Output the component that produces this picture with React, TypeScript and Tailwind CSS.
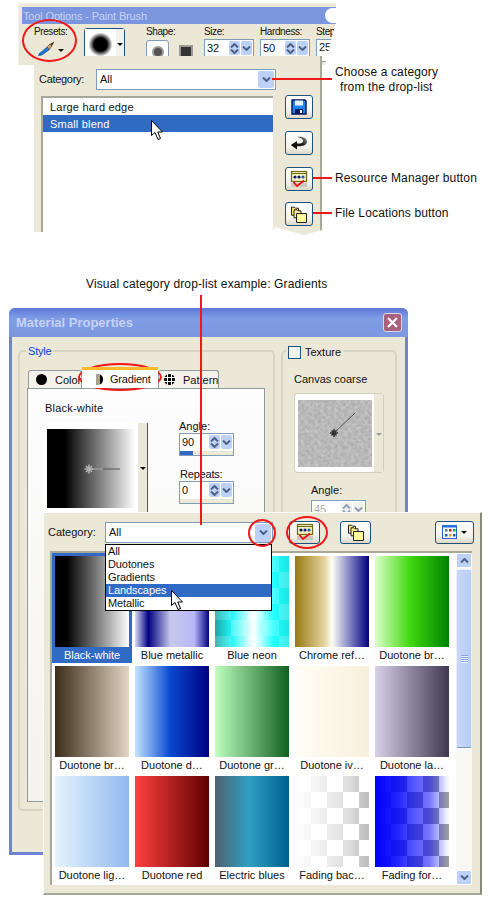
import React from 'react';

const ui = "font-['Liberation_Sans',Arial,sans-serif] text-[11px] leading-[14px] text-[#111]";
const toolLabel = 'text-[10px] tracking-[-0.4px]';

const swatches = [
    { name: 'Black-white', bg: 'bg-[linear-gradient(to_right,#000_16%,#fff_100%)]' },
    { name: 'Blue metallic', bg: 'bg-[linear-gradient(to_right,#d8d8f8_0%,#000080_18%,#c8c8ec_48%,#b8b8f8_80%,#000080_100%)]' },
    { name: 'Blue neon', bg: 'bg-[linear-gradient(to_right,rgba(255,255,255,0.12),rgba(255,255,255,0.12)),repeating-conic-gradient(rgba(255,255,255,0.16)_0_25%,transparent_0_50%),linear-gradient(to_right,#009898_0%,#00f4f4_22%,#fff_52%,#00ffff_80%,#00e0e0_100%)] bg-[length:100%_100%,32px_32px,100%_100%]' },
    { name: 'Chrome ref…', bg: 'bg-[linear-gradient(to_right,#987810_0%,#e4d4a0_40%,#fffef4_50%,#a0a0d0_68%,#000080_100%)]' },
    { name: 'Duotone br…', bg: 'bg-[linear-gradient(to_right,#dcffc8_0%,#40d810_48%,#008000_100%)]' },
    { name: 'Duotone br…', bg: 'bg-[linear-gradient(to_right,#3c2c18,#e2d6c4)]' },
    { name: 'Duotone d…', bg: 'bg-[linear-gradient(to_right,#c4e4ff_0%,#0848d0_48%,#000080_100%)]' },
    { name: 'Duotone gr…', bg: 'bg-[linear-gradient(to_right,#c0ffc0,#106020)]' },
    { name: 'Duotone iv…', bg: 'bg-[linear-gradient(to_right,#fffdf6,#f8f0dc)]' },
    { name: 'Duotone la…', bg: 'bg-[linear-gradient(to_right,#d8d0e8,#403850)]' },
    { name: 'Duotone lig…', bg: 'bg-[linear-gradient(to_right,#e4f4fc,#90b8f0)]' },
    { name: 'Duotone red', bg: 'bg-[linear-gradient(to_right,#ff4040,#600000)]' },
    { name: 'Electric blues', bg: 'bg-[linear-gradient(to_right,#506070_0%,#30a0c0_45%,#006090_100%)]' },
    { name: 'Fading bac…', bg: 'bg-[linear-gradient(to_right,#fff_0%,rgba(255,255,255,0.82)_32%,rgba(255,255,255,0.5)_76%,rgba(255,255,255,0.1)_95%),repeating-conic-gradient(#b8b8b8_0_25%,#fff_0_50%)] bg-[length:100%_100%,32px_32px]' },
    { name: 'Fading for…', bg: 'bg-[linear-gradient(to_right,#00f_0%,rgba(0,0,255,0.85)_32%,rgba(0,0,255,0.65)_54%,rgba(0,0,255,0.55)_73%,rgba(0,0,255,0)_100%),repeating-conic-gradient(#a0a0a0_0_25%,#fff_0_50%)] bg-[length:100%_100%,32px_32px]' },
];

function Chevron({ up = false }: { up?: boolean }) {
    return (
        <svg width="9" height="5" viewBox="0 0 9 5" className="block">
            <path d={up ? 'M1 4.5 L4.5 1 L8 4.5' : 'M1 .5 L4.5 4 L8 .5'} fill="none" stroke="#4d6185" strokeWidth="2" />
        </svg>
    );
}

function Spin({ disabled = false }: { disabled?: boolean }) {
    const box = disabled ? 'bg-[#e8e8e0] opacity-60' : 'bg-[#bdd0f7]';
    return (
        <div className="flex gap-[1px]">
            <div className={`w-[11px] h-[14px] rounded-[2px] flex flex-col items-center justify-center gap-[1px] ${box}`}>
                <Chevron up />
                <Chevron />
            </div>
            <div className={`w-[11px] h-[14px] rounded-[2px] flex items-center justify-center ${box}`}>
                <Chevron />
            </div>
        </div>
    );
}

function NumInput({ value, w = 'w-[50px]', fill = '', disabled = false }: { value: string; w?: string; fill?: string; disabled?: boolean }) {
    return (
        <div className={`${w} h-[23px] border border-[#7f9db9] bg-white flex flex-col`}>
            <div className="h-[16px] pl-[2px] pr-[1px] flex items-center justify-between">
                <span className={`text-[11px] ${disabled ? 'text-[#aaa]' : ''}`}>{value}</span>
                <Spin disabled={disabled} />
            </div>
            <div className="flex-1 bg-[#ebe8d8] mt-[1px]">
                {fill && <div className={`h-full bg-[#316ac5] ${fill}`} />}
            </div>
        </div>
    );
}

function ToolBtn({ w, h, children }: { w: string; h: string; children: React.ReactNode }) {
    return (
        <div className={`${w} ${h} shrink-0 border border-[#1c5180] rounded-[3px] bg-[linear-gradient(to_bottom,#fff,#f2f1ea_70%,#dcd8c8)] flex items-center justify-center`}>
            {children}
        </div>
    );
}

function Arrow({ color = '#111' }: { color?: string }) {
    return <div className="w-0 h-0 border-x-[3px] border-x-transparent border-t-[3px]" style={{ borderTopColor: color }} />;
}

function Floppy() {
    return (
        <svg width="16" height="16" viewBox="0 0 16 16">
            <path d="M1 1h13l1 1v13H1z" fill="#1e84f4" stroke="#06124a" strokeWidth="1.4" />
            <rect x="4" y="1.5" width="8" height="5" fill="#e8f2ff" />
            <rect x="4" y="10" width="8" height="5" fill="#0a1a60" />
            <rect x="9" y="11" width="2" height="3" fill="#fff" />
        </svg>
    );
}

function UndoIcon() {
    return (
        <svg width="18" height="14" viewBox="0 0 18 14">
            <defs>
                <linearGradient id="undo" x1="0" x2="1" y1="1" y2="0">
                    <stop offset="0" stopColor="#000" />
                    <stop offset="0.6" stopColor="#222" />
                    <stop offset="1" stopColor="#aaa" />
                </linearGradient>
            </defs>
            <path d="M7 .8 C12 .2 17 1.5 17 5.5 C17 9.5 12 10.5 7 10.2 V13.5 L.8 9 L7 5 V7.5 C10 7.8 13 7.2 13 5 C13 3 10 1.8 7 .8Z" fill="url(#undo)" />
        </svg>
    );
}

function ResourceIcon() {
    return (
        <svg width="18" height="18" viewBox="0 0 18 18">
            <rect x="1.5" y="1.5" width="15" height="10" fill="#f6f2c0" stroke="#6b6a10" strokeWidth="1.2" />
            <rect x="1" y="13" width="16" height="4" fill="#c8c8c0" />
            <line x1="2" y1="3.5" x2="16" y2="3.5" stroke="#6b6a10" />
            <circle cx="5" cy="7" r="1.6" fill="#0a1a70" />
            <circle cx="9" cy="7" r="1.6" fill="#0a1a70" />
            <circle cx="13" cy="7" r="1.6" fill="#1060a0" />
            <path d="M3.5 12 L7 16 L14 10.5" fill="none" stroke="#f01010" strokeWidth="1.8" />
        </svg>
    );
}

function FoldersIcon() {
    return (
        <svg width="16" height="17" viewBox="0 0 16 17">
            <path d="M.5 3V1.2h3l1 1h3v7h-7z" fill="#ffe880" stroke="#222" />
            <path d="M3 6V3.8h3l1 1h3v7H3z" fill="#fff09a" stroke="#222" />
            <path d="M5.5 7.5h10v9h-10z" fill="#ffff9c" stroke="#222" />
        </svg>
    );
}

function ViewIcon() {
    return (
        <svg width="15" height="14" viewBox="0 0 15 14">
            <rect x=".5" y=".5" width="14" height="13" fill="#f4f8ff" stroke="#2060d0" />
            <rect x="0" y="0" width="15" height="2.5" fill="#2070e0" />
            <rect x="3" y="4" width="2.5" height="2.5" fill="#707880" />
            <rect x="7" y="4" width="2.5" height="2.5" fill="#c02020" />
            <rect x="11" y="4" width="2.5" height="2.5" fill="#20a040" />
            <rect x="3" y="9" width="2.5" height="2.5" fill="#2060c0" />
            <rect x="7" y="9" width="2.5" height="2.5" fill="#e0a020" />
            <rect x="11" y="9" width="2.5" height="2.5" fill="#4050a0" />
        </svg>
    );
}

function BrushIcon() {
    return (
        <svg width="18" height="15" viewBox="0 0 18 15">
            <path d="M.5 14.5 C1 12 2.5 11.5 4 10.5 L9 6 L11.5 8.5 L6 12.5 C4.5 14 2.5 14.5 .5 14.5Z" fill="#1a7ad8" stroke="#0a3a80" strokeWidth=".6" />
            <path d="M9 6 L12 3 L14 5 L11.5 8.5Z" fill="#c8a070" stroke="#604020" strokeWidth=".6" />
            <path d="M12 3 L16.5 .5 L14 5Z" fill="#402c18" />
        </svg>
    );
}

function PatternIcon() {
    return (
        <svg width="11" height="11" viewBox="0 0 11 11" className="shrink-0">
            <circle cx="5.5" cy="5.5" r="5.5" fill="#000" />
            <path d="M3.5 0v11M7.5 0v11M0 3.5h11M0 7.5h11" stroke="#fff" />
        </svg>
    );
}

function Cursor({ className }: { className: string }) {
    return (
        <svg width="13" height="21" viewBox="0 0 13 21" className={className}>
            <path d="M.5 .5 V15.5 L4 12.5 L7 19.5 L9.5 18.5 L6.8 12 H11.5Z" fill="#fff" stroke="#000" />
        </svg>
    );
}

function GradCross() {
    return (
        <svg width="88" height="79" viewBox="0 0 88 79" className="absolute inset-0">
            <line x1="42" y1="40" x2="73" y2="40" stroke="#555" />
            <line x1="42" y1="40" x2="56" y2="40" stroke="#bbb" />
            <path d="M42 35.5v9M37.5 40h9M39 37l6 6M45 37l-6 6" stroke="#b0b0b0" strokeWidth="1.6" />
        </svg>
    );
}

function TextureSwatch() {
    return (
        <svg width="74" height="67" viewBox="0 0 74 67" className="block">
            <defs>
                <filter id="grain">
                    <feTurbulence type="fractalNoise" baseFrequency="0.3" numOctaves="3" seed="4" />
                    <feColorMatrix values="0 0 0 0 0.8  0 0 0 0 0.8  0 0 0 0 0.8  0 0 0 1.6 -0.5" />
                </filter>
                <pattern id="hatch" width="6" height="6" patternUnits="userSpaceOnUse" patternTransform="rotate(45)">
                    <line x1="0" y1="0" x2="0" y2="6" stroke="#989898" strokeWidth="1" />
                    <line x1="0" y1="3" x2="6" y2="3" stroke="#c4c4c4" strokeWidth="1" />
                </pattern>
            </defs>
            <rect width="74" height="67" fill="#b0b0b0" />
            <rect width="74" height="67" fill="url(#hatch)" opacity="0.5" />
            <rect width="74" height="67" filter="url(#grain)" opacity="0.5" />
            <line x1="36" y1="33" x2="57" y2="13" stroke="#333" strokeWidth=".8" />
            <path d="M36 29v8M32 33h8M33.5 30.5l5 5M38.5 30.5l-5 5" stroke="#333" strokeWidth="1.5" />
        </svg>
    );
}

function Callout({ y, x, w, children, textX }: { y: string; x: string; w: string; children?: React.ReactNode; textX?: string }) {
    return (
        <>
            <div className={`absolute h-[2px] bg-[#f01818] ${y} ${x} ${w}`} />
            {children && <div className={`absolute ${textX}`}>{children}</div>}
        </>
    );
}

const note = "font-['Liberation_Sans',Arial,sans-serif] text-[12px] leading-[15px] tracking-[0.14px] text-[#111] whitespace-nowrap";

function ToolOptions() {
    return (
        <div className="relative h-[277px]">
            <div className={`${ui} absolute left-[18px] top-[3px] w-[318px] h-[62px] bg-[#ebe8d8] border-t border-l border-[#f4f2e8] [clip-path:polygon(0_0,100%_0,100%_20px,315px_30px,307px_100%,0_100%)]`}>
                <div className="relative mt-[3px] ml-[3px] h-[17px] bg-[#7b96de] pl-[1px] flex items-center text-[#c6d2f2] text-[11px] tracking-[-0.15px]">
                    Tool Options - Paint Brush
                    <div className="absolute right-[-1px] top-[1px] w-[12px] h-[15px] bg-white rounded-l-full" />
                </div>
                <div className="flex pl-[15px] pt-[1px]">
                    <div className="w-[50px] flex flex-col">
                        <span className={toolLabel}>Presets:</span>
                        <div className="mt-[2px] ml-[4px] flex items-center gap-[2px]">
                            <BrushIcon />
                            <div className="mt-[3px]"><Arrow /></div>
                        </div>
                    </div>
                    <div className="w-[41px] h-[38px] mt-[3px] border border-[#1c5180] rounded-[3px] bg-white flex">
                        <div className="w-[31px] h-[31px] bg-[radial-gradient(circle,#000_30%,#fff_55%)]" />
                        <div className="flex-1 bg-[#f2f1ea] flex justify-center pt-[14px]"><Arrow /></div>
                    </div>
                    <div className="w-[58px] ml-[21px] flex flex-col">
                        <span className={toolLabel}>Shape:</span>
                        <div className="mt-[1px] flex items-center gap-[10px]">
                            <div className="w-[23px] h-[23px] border border-[#7f9db9] rounded-[3px] bg-white flex items-center justify-center">
                                <div className="w-[12px] h-[12px] rounded-full bg-[#555] border-2 border-[#999]" />
                            </div>
                            <div className="w-[14px] h-[14px] bg-[#333] border-2 border-[#999]" />
                        </div>
                    </div>
                    <div className="w-[56px] flex flex-col">
                        <span className={toolLabel}>Size:</span>
                        <NumInput value="32" />
                    </div>
                    <div className="w-[56px] flex flex-col">
                        <span className={toolLabel}>Hardness:</span>
                        <NumInput value="50" />
                    </div>
                    <div className="w-[20px] flex flex-col">
                        <span className={toolLabel}>Step</span>
                        <div className="w-[17px] h-[23px] border border-r-0 border-[#7f9db9] bg-white text-[11px] pl-[2px]">25</div>
                    </div>
                </div>
            </div>

            <div className={`${ui} absolute left-[34px] top-[56px] w-[288px] h-[180px] bg-[#ebe8d8] border-r-2 border-[#a8a898] [clip-path:polygon(0_0,100%_0,100%_174px,270px_179px,241px_171px,238px_176px,0_176px)]`}>
                <div className="flex items-center h-[33px] pl-[5px] pt-[13px]">
                    <span className="w-[57px] tracking-[-0.3px]">Category:</span>
                    <div className="w-[180px] h-[21px] border border-[#7f9db9] bg-white flex items-center justify-between pl-[3px] pr-[1px]">
                        All
                        <div className="w-[16px] h-[17px] bg-[#bdd0f7] rounded-[2px] flex items-center justify-center"><Chevron /></div>
                    </div>
                </div>
                <div className="flex mt-[7px] pl-[7px]">
                    <div className="w-[232px] h-[140px] bg-white border-t-2 border-l-2 border-[#a8a898] tracking-[0.2px]">
                        <div className="h-[17px] pl-[7px] flex items-center">Large hard edge</div>
                        <div className="h-[17px] pl-[7px] flex items-center bg-[#316ac5] text-white">Small blend</div>
                    </div>
                    <div className="flex flex-col gap-[8px] ml-[12px] mt-[-1px]">
                        <ToolBtn w="w-[28px]" h="h-[24px]"><Floppy /></ToolBtn>
                        <div className="mt-[4px]"><ToolBtn w="w-[28px]" h="h-[24px]"><UndoIcon /></ToolBtn></div>
                        <div className="mt-[4px]"><ToolBtn w="w-[28px]" h="h-[24px]"><ResourceIcon /></ToolBtn></div>
                        <div className="mt-[3px]"><ToolBtn w="w-[28px]" h="h-[24px]"><FoldersIcon /></ToolBtn></div>
                    </div>
                </div>
            </div>

            <Cursor className="absolute left-[151px] top-[120px]" />
            <div className="absolute left-[22px] top-[19px] w-[55px] h-[43px] rounded-[50%] border-2 border-[#f01818]" />

            <Callout y="top-[78px]" x="left-[272px]" w="w-[60px]" textX="left-[335px] top-[65px]">
                <div className={note}>Choose a category</div>
                <div className={`${note} pl-[5px]`}>from the drop-list</div>
            </Callout>
            <Callout y="top-[177px]" x="left-[313px]" w="w-[19px]" textX="left-[335px] top-[171px]">
                <div className={note}>Resource Manager button</div>
            </Callout>
            <Callout y="top-[212px]" x="left-[313px]" w="w-[19px]" textX="left-[335px] top-[206px]">
                <div className={note}>File Locations button</div>
            </Callout>
        </div>
    );
}

function Thumb({ name, bg, selected }: { name: string; bg: string; selected?: boolean }) {
    return (
        <div className={`h-[110px] px-[3px] pt-[3px] flex flex-col ${selected ? 'bg-[#316ac5] text-white' : ''}`}>
            <div className={`w-[74px] h-[91px] shrink-0 ${bg}`} />
            <div className={`h-[16px] text-center leading-[16px] whitespace-nowrap ${selected ? 'text-white' : ''}`}>{name}</div>
        </div>
    );
}

function PresetPanel() {
    return (
        <div className={`${ui} absolute left-[34px] top-[204px] w-[439px] h-[383px] bg-[#ebe8d8] border-t border-l border-t-white border-l-[#f8f8f4] border-r-2 border-b-2 border-r-[#8a8a7a] border-b-[#a8a898]`}>
            <div className="h-[38px] flex items-center pl-[4px] relative">
                <span className="w-[57px]">Category:</span>
                <div className="w-[168px] h-[21px] border border-[#7f9db9] bg-white flex items-center justify-between pl-[3px] pr-[1px]">
                    All
                    <div className="w-[16px] h-[18px] mt-[1px] bg-[#bdd0f7] rounded-[2px] flex items-center justify-center"><Chevron /></div>
                </div>
                <div className="ml-[16px]"><ToolBtn w="w-[31px]" h="h-[23px]"><ResourceIcon /></ToolBtn></div>
                <div className="ml-[20px]"><ToolBtn w="w-[31px]" h="h-[23px]"><FoldersIcon /></ToolBtn></div>
                <div className="ml-[64px]">
                    <ToolBtn w="w-[39px]" h="h-[23px]">
                        <div className="flex items-center gap-[4px]"><ViewIcon /><Arrow /></div>
                    </ToolBtn>
                </div>
            </div>

            <div className="ml-[6px] w-[422px] h-[334px] bg-white border-t-2 border-l-2 border-[#a8a898] flex">
                <div className="w-[404px] grid grid-cols-[repeat(5,80px)] content-start">
                    {swatches.map((s, i) => (
                        <Thumb key={i} name={s.name} bg={s.bg} selected={i === 0} />
                    ))}
                </div>
                <div className="w-[16px] bg-[#f8f8f4] flex flex-col">
                    <div className="h-[15px] bg-[#bdd0f7] border border-white rounded-[2px] flex items-center justify-center"><Chevron up /></div>
                    <div className="h-[179px] mt-[1px] bg-[linear-gradient(to_right,#c8d8f8,#b8ccf6)] border border-[#e8f0ff] border-b-[#7f9db9] rounded-[2px] flex items-center justify-center">
                        <div className="w-[7px] h-[8px] bg-[repeating-linear-gradient(to_bottom,#8aa4e0_0_1px,#e8f0ff_1px_2px)]" />
                    </div>
                    <div className="flex-1" />
                    <div className="h-[15px] bg-[#bdd0f7] border border-white rounded-[2px] flex items-center justify-center"><Chevron /></div>
                </div>
            </div>

            {/* open drop list */}
            <div className="absolute left-[61px] top-[31px] w-[167px] h-[67px] bg-white border border-black leading-[13px] tracking-[-0.1px]">
                {['All', 'Duotones', 'Gradients', 'Landscapes', 'Metallic'].map((c) => (
                    <div key={c} className={`h-[13px] pl-[2px] ${c === 'Landscapes' ? 'bg-[#316ac5] text-white' : ''}`}>{c}</div>
                ))}
            </div>
        </div>
    );
}

function MaterialWindow() {
    return (
        <div className={`${ui} relative ml-[9px] mt-[17px] w-[399px] h-[547px] bg-[#6f82d8] rounded-t-[6px] flex flex-col`}>
            <div className="h-[29px] shrink-0 rounded-t-[6px] bg-[linear-gradient(to_bottom,#5d78d8,#7f9ce4_35%,#7c97e0)] pl-[7px] pr-[6px] flex items-center justify-between">
                <span className="font-bold text-[13px] text-[#c6d2f2]">Material Properties</span>
                <div className="w-[19px] h-[19px] rounded-[3px] border border-[#d8d8e8] bg-[#a8607c] flex items-center justify-center">
                    <svg width="11" height="11" viewBox="0 0 11 11">
                        <path d="M1 1l9 9M10 1l-9 9" stroke="#fff" strokeWidth="2.2" />
                    </svg>
                </div>
            </div>
            <div className="mx-[3px] mb-[3px] flex-1 bg-[#ebe8d8] flex gap-[6px] pl-[6px] pt-[13px]">
                <div className="relative w-[257px] h-[461px] border-2 border-[#d6d5c4] rounded-[5px] pl-[7px] pt-[15px]">
                    <span className="absolute left-[6px] top-[-8px] bg-[#ebe8d8] px-[2px] tracking-[-0.2px] text-[#0046d5]">Style</span>
                    <div className="flex items-end h-[21px] pl-[1px]">
                        <div className="w-[54px] h-[18px] border border-b-0 border-[#919b9c] rounded-t-[3px] bg-[#f4f3ea] flex items-center pl-[7px] gap-[8px]">
                            <div className="w-[11px] h-[11px] shrink-0 rounded-full bg-black" />
                            Color
                        </div>
                        <div className="w-[76px] h-[21px] border-t-[3px] border-t-[#fdb92c] bg-white flex items-center pl-[14px] gap-[7px] z-10 tracking-[-0.2px]">
                            <div className="w-[7px] h-[11px] shrink-0 bg-[linear-gradient(to_right,#a8a090_50%,#000_50%)] rounded-r-[5px]" />
                            Gradient
                        </div>
                        <div className="w-[61px] h-[18px] border border-b-0 border-[#919b9c] rounded-t-[3px] bg-[#f4f3ea] flex items-center pl-[5px] gap-[8px]">
                            <PatternIcon />
                            Pattern
                        </div>
                    </div>
                    <div className="w-[238px] h-[414px] border border-[#919b9c] bg-[linear-gradient(to_bottom,#fdfdfe,#f4f3ee)] pl-[15px] pt-[12px]">
                        <div className="ml-[2px] tracking-[0.2px]">Black-white</div>
                        <div className="flex mt-[8px]">
                            <div className="w-[105px] h-[90px] flex border-r border-[#555]">
                                <div className="w-[95px] h-full bg-white pl-[4px] pt-[6px]">
                                    <div className="relative w-[88px] h-[79px] bg-[linear-gradient(to_right,#000_20%,#fff_100%)]"><GradCross /></div>
                                </div>
                                <div className="flex-1 bg-[#ebe8d8] flex justify-center pt-[44px]"><Arrow /></div>
                            </div>
                            <div className="ml-[31px] flex flex-col">
                                <span className="mt-[-4px]">Angle:</span>
                                <NumInput value="90" w="w-[55px]" fill="w-[13px]" />
                                <span className="mt-[11px] ml-[1px] tracking-[-0.2px]">Repeats:</span>
                                <NumInput value="0" w="w-[55px]" />
                            </div>
                        </div>
                    </div>
                </div>

                <div className="relative w-[116px] h-[461px] border-2 border-[#d6d5c4] rounded-[5px] pl-[11px] pt-[20px]">
                    <div className="absolute left-[3px] top-[-7px] bg-[#ebe8d8] px-[2px] flex items-center gap-[4px]">
                        <div className="w-[13px] h-[13px] border border-[#1c5180] bg-[#f4f3ea]" />
                        Texture
                    </div>
                    <div>Canvas coarse</div>
                    <div className="mt-[7px] w-[90px] h-[80px] border border-[#d0d0bf] rounded-[3px] bg-white flex">
                        <div className="w-[79px] pl-[3px] pt-[6px]"><TextureSwatch /></div>
                        <div className="flex-1 bg-[#ebe8d8] flex justify-center pt-[39px]"><Arrow color="#999" /></div>
                    </div>
                    <div className="mt-[10px] ml-[17px]">Angle:</div>
                    <div className="mt-[3px] ml-[17px]"><NumInput value="45" w="w-[55px]" disabled /></div>
                </div>
            </div>
            <PresetPanel />
        </div>
    );
}

export default function App() {
    return (
        <div className="relative w-[490px] h-[901px] overflow-hidden bg-white">
            <ToolOptions />
            <div className={`${note} h-[14px] pl-[86px]`}>Visual category drop-list example: Gradients</div>
            <MaterialWindow />

            <Cursor className="absolute left-[171px] top-[590px]" />
            <div className="absolute left-[200px] top-[295px] w-[2px] h-[230px] bg-[#f01818]" />
            <div className="absolute left-[78px] top-[363px] w-[84px] h-[28px] rounded-[50%] border-2 border-[#f01818]" />
            <div className="absolute left-[248px] top-[519px] w-[28px] h-[28px] rounded-[50%] border-2 border-[#f01818]" />
            <div className="absolute left-[286px] top-[516px] w-[42px] h-[33px] rounded-[50%] border-2 border-[#f01818]" />
        </div>
    );
}
